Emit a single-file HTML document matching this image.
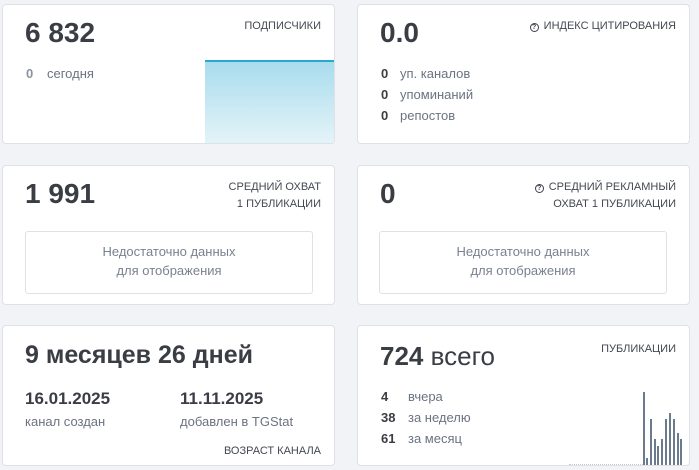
<!DOCTYPE html>
<html><head><meta charset="utf-8"><style>
*{margin:0;padding:0;box-sizing:border-box}
body{width:699px;height:470px;background:#f2f3f7;font-family:"Liberation Sans","DejaVu Sans",sans-serif;position:relative;overflow:hidden;color:#3d4048}
.c{position:absolute;background:#fff;border:1px solid #dfe1e6;border-radius:4px;overflow:hidden}
.a{position:absolute;white-space:nowrap}
.big{font-size:28px;font-weight:bold;color:#3a3d44}
.lbl{font-size:11px;color:#444852;text-align:right;line-height:17px}
.g{font-size:13px;color:#6b7380}
.n{font-size:13px;font-weight:bold;color:#3a3d44}
.box{position:absolute;border:1px solid #dfe1e6;border-radius:3px;text-align:center;font-size:13px;color:#7a8190;line-height:19px;padding-top:10px}
.q{display:inline-block;width:9px;height:9px;border:1.3px solid #3d4048;border-radius:50%;font-size:7px;line-height:7px;text-align:center;vertical-align:0px;margin-right:5px;font-weight:bold}
.b{position:absolute;bottom:0;width:2px;background:#6b7a8c}
</style></head><body>
<div class="c" style="left:2px;top:4px;width:333px;height:140px">
<div class="a big" style="left:22px;top:12px">6 832</div>
<div class="a lbl" style="right:13px;top:13px">ПОДПИСЧИКИ</div>
<div class="a n" style="left:23px;top:61px;color:#8a93a0">0</div>
<div class="a g" style="left:44px;top:61px">сегодня</div>
<div class="a" style="left:202px;top:55px;width:130px;height:84px;border-top:2px solid #2aa8cf;background:linear-gradient(#a9dced,#e4f4f9)"></div>
</div>
<div class="c" style="left:357px;top:4px;width:333px;height:140px">
<div class="a big" style="left:22px;top:12px">0.0</div>
<div class="a lbl" style="right:13px;top:13px"><span class="q">?</span>ИНДЕКС ЦИТИРОВАНИЯ</div>
<div class="a n" style="left:23px;top:61px">0</div><div class="a g" style="left:42px;top:61px">уп. каналов</div>
<div class="a n" style="left:23px;top:82px">0</div><div class="a g" style="left:42px;top:82px">упоминаний</div>
<div class="a n" style="left:23px;top:103px">0</div><div class="a g" style="left:42px;top:103px">репостов</div>
</div>
<div class="c" style="left:2px;top:165px;width:333px;height:140px">
<div class="a big" style="left:22px;top:12px">1 991</div>
<div class="a lbl" style="right:13px;top:13px">СРЕДНИЙ ОХВАТ<br>1 ПУБЛИКАЦИИ</div>
<div class="box" style="left:22px;top:65px;width:288px;height:63px">Недостаточно данных<br>для отображения</div>
</div>
<div class="c" style="left:357px;top:165px;width:333px;height:140px">
<div class="a big" style="left:22px;top:12px">0</div>
<div class="a lbl" style="right:13px;top:13px"><span class="q">?</span>СРЕДНИЙ РЕКЛАМНЫЙ<br>ОХВАТ 1 ПУБЛИКАЦИИ</div>
<div class="box" style="left:21px;top:65px;width:288px;height:63px">Недостаточно данных<br>для отображения</div>
</div>
<div class="c" style="left:2px;top:325px;width:333px;height:141px">
<div class="a big" style="left:22px;top:15px;font-size:25px">9 месяцев 26 дней</div>
<div class="a" style="left:22px;top:63px;font-size:17px;font-weight:bold;color:#3a3d44">16.01.2025</div>
<div class="a g" style="left:22px;top:88px">канал создан</div>
<div class="a" style="left:177px;top:63px;font-size:17px;font-weight:bold;color:#3a3d44">11.11.2025</div>
<div class="a g" style="left:177px;top:88px">добавлен в TGStat</div>
<div class="a lbl" style="right:13px;top:117px">ВОЗРАСТ КАНАЛА</div>
</div>
<div class="c" style="left:357px;top:325px;width:333px;height:141px">
<div class="a big" style="left:22px;top:15px;font-size:26px">724 <span style="font-weight:normal">всего</span></div>
<div class="a lbl" style="right:13px;top:15px">ПУБЛИКАЦИИ</div>
<div class="a n" style="left:23px;top:63px">4</div><div class="a g" style="left:50px;top:63px">вчера</div>
<div class="a n" style="left:23px;top:84px">38</div><div class="a g" style="left:50px;top:84px">за неделю</div>
<div class="a n" style="left:23px;top:105px">61</div><div class="a g" style="left:50px;top:105px">за месяц</div>
<div class="a" style="left:211px;top:138px;width:74px;border-top:1px dotted #c5cad2"></div>
<div class="a" style="left:0;top:0;width:333px;height:139px">
<div class="b" style="left:285px;height:73px"></div>
<div class="b" style="left:288px;height:7px"></div>
<div class="b" style="left:292px;height:46px"></div>
<div class="b" style="left:296px;height:26px"></div>
<div class="b" style="left:299px;height:19px"></div>
<div class="b" style="left:303px;height:26px"></div>
<div class="b" style="left:307px;height:46px"></div>
<div class="b" style="left:311px;height:52px"></div>
<div class="b" style="left:315px;height:46px"></div>
<div class="b" style="left:319px;height:32px"></div>
<div class="b" style="left:322px;height:26px"></div>
</div>
</div>
</body></html>
